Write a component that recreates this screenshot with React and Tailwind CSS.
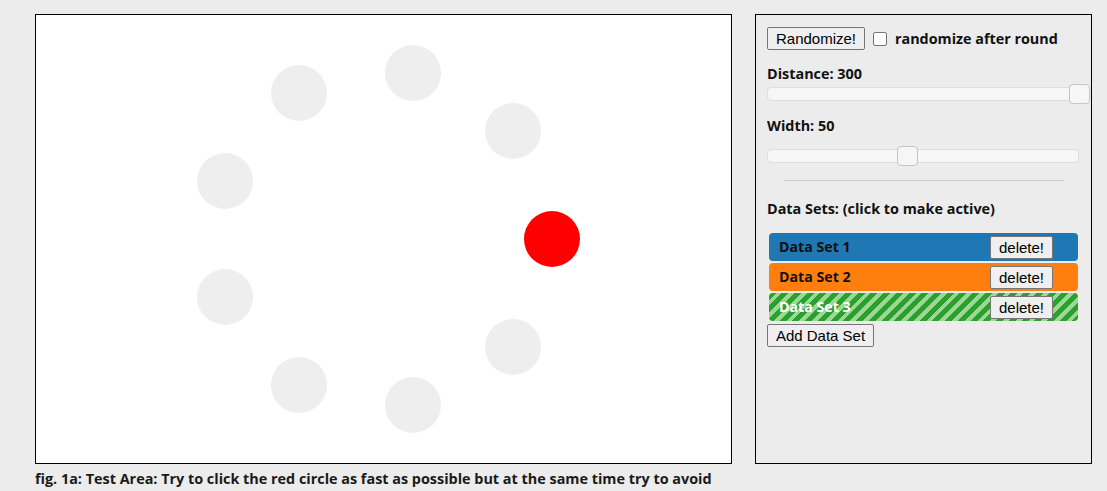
import React from "react";

const circles = Array.from({ length: 9 }, (_, i) => {
  const a = (i * 40 * Math.PI) / 180;
  return { x: 347.5 + 168.6 * Math.cos(a), y: 224 + 168.6 * Math.sin(a), red: i === 0 };
});

function Slider({ pct, trackW = 312 }) {
  return (
    <div className="relative h-[14px] rounded-[4px] border border-[#dddddd] bg-[#f6f6f6]" style={{ width: trackW }}>
      <div
        className="absolute top-[-4px] h-[20px] w-[21px] rounded-[4px] border border-[#c5c5c5] bg-[#f6f6f6]"
        style={{ left: `calc(${pct}% - 9px)` }}
      />
    </div>
  );
}

function Btn({ children, className = "" }) {
  return (
    <button
      className={
        "h-[23px] rounded-[2px] border border-[#767676] bg-[#efefef] px-[7px] text-[15px] leading-none text-black " +
        className
      }
      style={{ fontFamily: '"Liberation Sans", Arial, sans-serif' }}
    >
      {children}
    </button>
  );
}

function Row({ label, bg, textCls }) {
  return (
    <div className={"ml-[2px] flex h-[28px] w-[309px] items-center justify-between rounded-[4px] pl-[10px] pr-[25px] " + bg}>
      <span className={"text-[14.2px] font-bold " + textCls}>{label}</span>
      <Btn className="w-[63px] px-0">delete!</Btn>
    </div>
  );
}

export default function App() {
  return (
    <div
      className="h-[491px] w-[1107px] overflow-hidden bg-[#ececec] pl-[35px] pt-[14px]"
      style={{ fontFamily: '"Open Sans", "Noto Sans", sans-serif' }}
    >
      <div className="flex gap-[23px]">
        <div>
          <div className="relative h-[450px] w-[697px] border border-black bg-white">
            {circles.map((c, i) => (
              <div
                key={i}
                className={"absolute h-[56px] w-[56px] rounded-full " + (c.red ? "bg-[#ff0000]" : "bg-[#eeeeee]")}
                style={{ left: c.x - 28, top: c.y - 28 }}
              />
            ))}
          </div>
          <p className="mt-[5px] whitespace-nowrap text-[14.4px] font-bold leading-[20px] text-[#1a1a1a]">
            fig. 1a: Test Area: Try to click the red circle as fast as possible but at the same time try to avoid
          </p>
        </div>
        <div className="h-[450px] w-[337px] border border-black bg-[#ececec] pl-[11px]">
          <div className="mt-[12px] flex items-center">
            <Btn className="w-[98px] px-0">Randomize!</Btn>
            <div className="ml-[8px] h-[14px] w-[14px] rounded-[2px] border border-[#767676] bg-white" />
            <span className="ml-[8px] text-[14.35px] font-bold text-[#111]">randomize after round</span>
          </div>
          <div className="mt-[15px] text-[14.4px] font-bold leading-[18px] text-[#111]">Distance: 300</div>
          <div className="mt-[4px]">
            <Slider pct={100} />
          </div>
          <div className="mt-[16px] text-[14.4px] font-bold leading-[18px] text-[#111]">Width: 50</div>
          <div className="mt-[14px]">
            <Slider pct={44.5} />
          </div>
          <div className="ml-[17px] mt-[17px] h-px w-[280px] bg-[#cccccc]" />
          <div className="mt-[19px] text-[14.4px] font-bold leading-[18px] text-[#111]">Data Sets: (click to make active)</div>
          <div className="mt-[15px] flex flex-col gap-[2px]">
            <Row label="Data Set 1" bg="bg-[#1f77b4]" textCls="text-[#111]" />
            <Row label="Data Set 2" bg="bg-[#ff7f0e]" textCls="text-[#111]" />
            <Row
              label="Data Set 3"
              bg="bg-[repeating-linear-gradient(135deg,#2ca02c_0px,#2ca02c_5px,#9dd795_5px,#9dd795_9px)]"
              textCls="text-white"
            />
          </div>
          <div className="mt-[2px]">
            <Btn className="w-[107px] px-0">Add Data Set</Btn>
          </div>
        </div>
      </div>
    </div>
  );
}
